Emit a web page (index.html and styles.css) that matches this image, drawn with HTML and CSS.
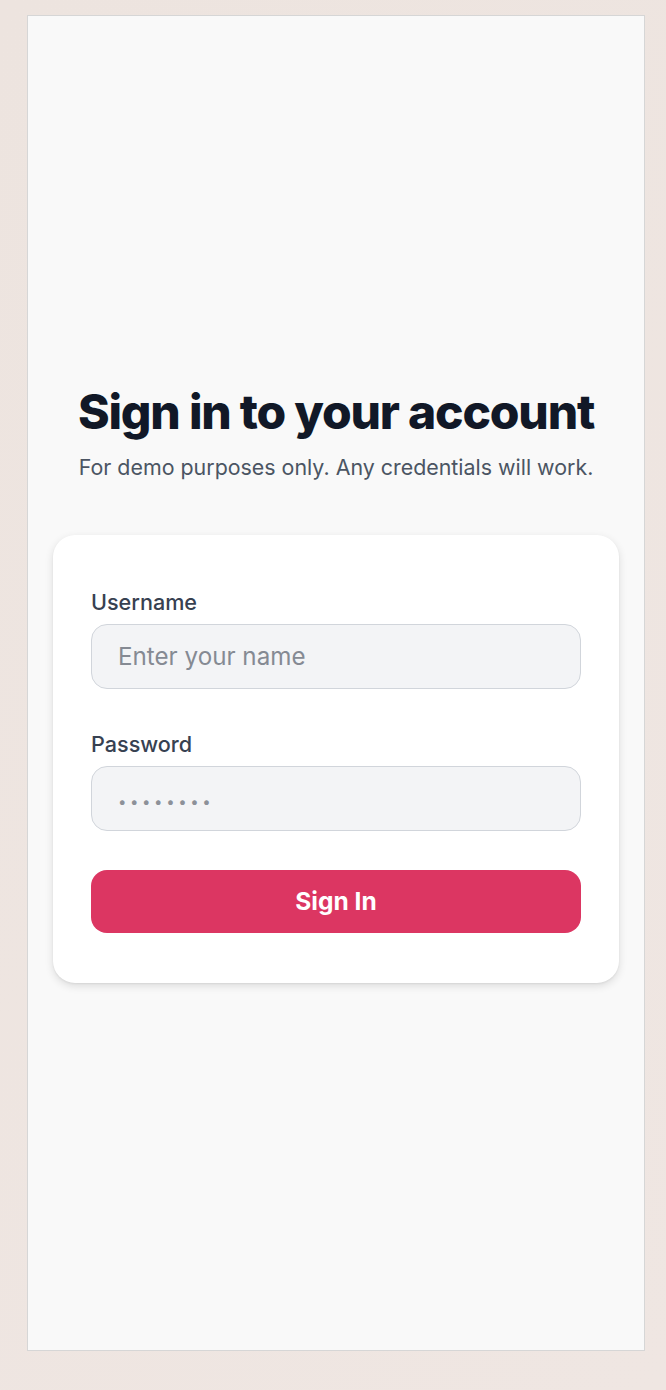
FILE: index.html
```html
<!DOCTYPE html>
<html lang="en">
<head>
<meta charset="utf-8">
<title>Sign in</title>
<link rel="stylesheet" href="styles.css">
</head>
<body>
<div class="frame">
  <main class="content">
    <header class="intro">
      <h1 class="title">Sign in to your account</h1>
      <p class="subtitle">For demo purposes only. Any credentials will work.</p>
    </header>
    <form class="card">
      <div class="field">
        <label class="label" for="username">Username</label>
        <input class="input" id="username" type="text" placeholder="Enter your name">
      </div>
      <div class="field">
        <label class="label" for="password">Password</label>
        <input class="input input-pw" id="password" type="password" placeholder="••••••••">
      </div>
      <button class="btn" type="button">Sign In</button>
    </form>
  </main>
</div>
</body>
</html>
```
FILE: styles.css
```css
* { box-sizing: border-box; }
html, body { margin: 0; padding: 0; }
body {
  background: linear-gradient(135deg, #ede4df 0%, #efe6e2 100%);
  font-family: Inter, "Noto Sans", sans-serif;
  width: 666px;
  height: 1390px;
  overflow: hidden;
}
.frame {
  margin: 15px 0 0 27px;
  width: 618px;
  height: 1336px;
  background: #f9f9f9;
  border: 1px solid #d6d6d6;
  display: flex;
  align-items: center;
  justify-content: center;
}
.content {
  width: 566px;
  display: flex;
  flex-direction: column;
  align-items: center;
}
.intro { text-align: center; margin-bottom: 53px; }
.title {
  margin: 0;
  font-size: 48px;
  font-weight: 800;
  color: #111827;
  letter-spacing: -1.2px;
  line-height: 56px;
}
.subtitle {
  margin: 12px 0 0;
  font-size: 21.4px;
  color: #4b5563;
  line-height: 30px;
}
.card {
  width: 566px;
  background: #fff;
  border-radius: 22px;
  box-shadow: 0 3px 8px rgba(0,0,0,0.12), 0 1px 2px rgba(0,0,0,0.06);
  padding: 53px 38px 50px;
  display: flex;
  flex-direction: column;
}
.field { display: flex; flex-direction: column; margin-bottom: 41px; }
.field + .field { margin-bottom: 39px; }
.label {
  font-size: 21.6px;
  font-weight: 500;
  color: #374151;
  line-height: 28px;
  margin-bottom: 8px;
}
.input {
  height: 65px;
  border: 1.5px solid #d1d5db;
  border-radius: 16px;
  background: #f3f4f6;
  padding: 0 26px;
  font-family: inherit;
  font-size: 24.2px;
  color: #111827;
  outline: none;
}
.input::placeholder { color: #858a93; }
.input-pw::placeholder { font-size: 15px; letter-spacing: 3.6px; color: #8d9199; }
.btn {
  height: 63px;
  border: 0;
  border-radius: 16px;
  background: #dc3662;
  color: #fff;
  font-family: inherit;
  font-size: 24.5px;
  font-weight: 700;
}
```
